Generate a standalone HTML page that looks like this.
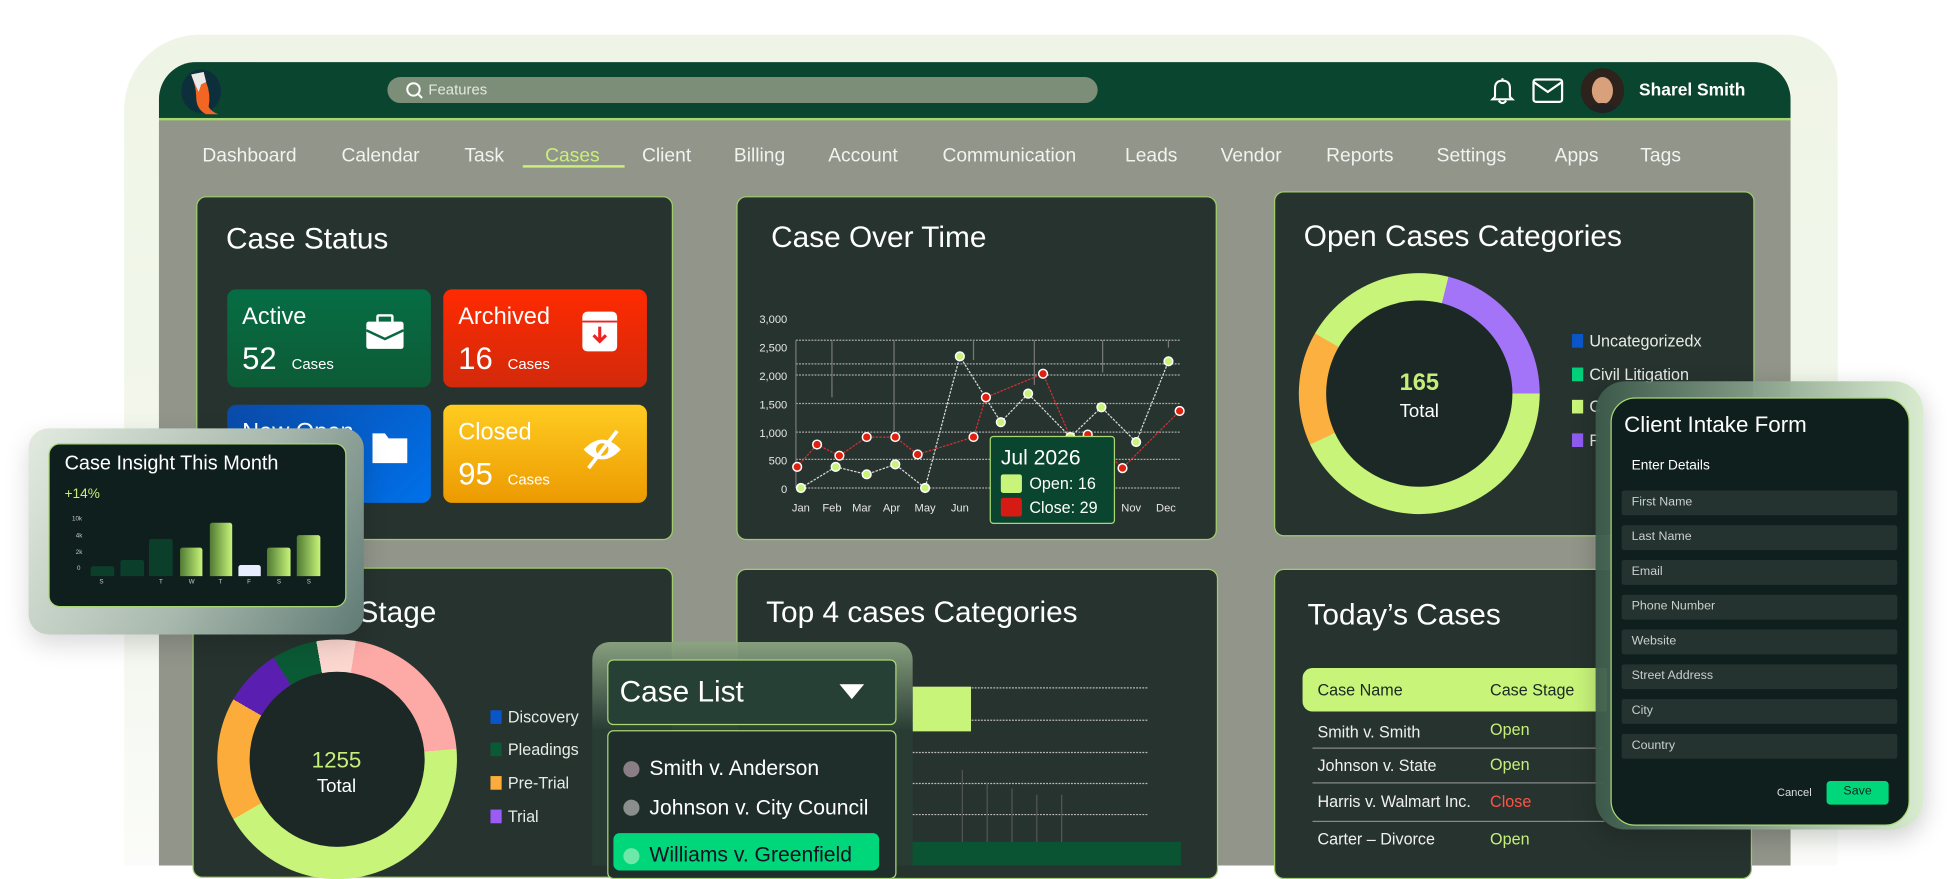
<!DOCTYPE html>
<html><head><meta charset="utf-8"><style>
*{margin:0;padding:0;box-sizing:border-box}
html,body{width:1947px;height:865px;overflow:hidden;background:#fff;font-family:"Liberation Sans",sans-serif}
#w{position:absolute;left:0;top:0;width:1568px;height:697px;transform:scale(1.24171);transform-origin:0 0}
.a{position:absolute}
.card{position:absolute;background:#27332f;border:1px solid #9fcf6a;border-radius:8px}
.t{position:absolute;color:#fff;white-space:nowrap}
.nav{position:absolute;top:117px;color:#f2f2ee;font-size:15.5px}
.tile{position:absolute;width:164px;height:79px;border-radius:7px}
.tile .n{position:absolute;left:12px;top:12px;color:#fff;font-size:19px}
.tile .c{position:absolute;left:12px;top:42px;color:#fff;font-size:25px}
.tile .c span{font-size:12px;margin-left:12px}
.fld{position:absolute;left:9px;width:222px;height:20px;background:#243330;border-radius:2px;color:#c9cfcc;font-size:10px;padding:4px 0 0 8px}
.lg{position:absolute;font-size:13px;color:#e8ece6}
.lg i{position:absolute;left:-14px;top:2px;width:9px;height:11px}
.row{position:absolute;left:1061px;font-size:13px;color:#f0f0f0}
.st{position:absolute;left:1200px;font-size:13px}
</style></head><body><div id="w">
<div class="a" style="left:100px;top:28px;width:1380px;height:669px;border-radius:60px 40px 0 0;background:linear-gradient(180deg,#eff5e6,#f3f7ee 70%,#fbfcf9);"></div>
<div class="a" style="left:128px;top:50px;width:1314px;height:647px;background:#92958a;border-radius:30px 30px 0 0;overflow:hidden">
 <div class="a" style="left:0;top:0;width:1314px;height:47px;background:#0a4530;border-bottom:2px solid #a9d873"></div>
</div>
<div class="a" style="left:146px;top:56px;width:32px;height:35px;border-radius:50%;background:#0d2f3c"></div>
<svg class="a" style="left:144px;top:54px" width="40" height="42" viewBox="0 0 40 42"><path d="M10 6 L20 4 L22 12 Q26 22 24 32 Q26 36 32 38 L22 38 Q14 34 14 24 Q14 16 10 6Z" fill="#f26522"/><path d="M10 6 L20 4 L22 12 L18 14 L16 20 Q12 12 10 6Z" fill="#e9e9e9"/></svg>
<div class="a" style="left:312px;top:62px;width:572px;height:21px;border-radius:11px;background:#7c8d78"></div>
<svg class="a" style="left:326px;top:65px" width="16" height="16" viewBox="0 0 16 16"><circle cx="7" cy="7" r="5" fill="none" stroke="#fff" stroke-width="1.6"/><path d="M10.5 10.5 L14 14" stroke="#fff" stroke-width="1.6"/></svg>
<div class="t" style="left:345px;top:65px;font-size:12px;color:#e4e8e0">Features</div>
<svg class="a" style="left:1199px;top:60px" width="22" height="26" viewBox="0 0 22 26"><path d="M11 3 V5 M5 18 V11 Q5 5 11 5 Q17 5 17 11 V18 L19 20 H3 L5 18Z M8 21 Q11 25 14 21" fill="none" stroke="#fff" stroke-width="1.7"/></svg>
<svg class="a" style="left:1233px;top:61px" width="28" height="24" viewBox="0 0 28 24"><rect x="2" y="3" width="23" height="18" rx="2" fill="none" stroke="#fff" stroke-width="1.8"/><path d="M2 5 L13.5 13 L25 5" fill="none" stroke="#fff" stroke-width="1.8"/></svg>
<div class="a" style="left:1273px;top:55px;width:35px;height:36px;border-radius:50%;background:#2e221c;overflow:hidden"><div class="a" style="left:9px;top:7px;width:17px;height:22px;border-radius:50%;background:#d9a07c"></div><div class="a" style="left:6px;top:28px;width:23px;height:12px;border-radius:50%;background:#222"></div></div>
<div class="t" style="left:1320px;top:64px;font-size:14px;font-weight:bold">Sharel Smith</div>
<div class="nav" style="left:163px">Dashboard</div>
<div class="nav" style="left:275px">Calendar</div>
<div class="nav" style="left:374px">Task</div>
<div class="nav" style="left:439px;color:#c8f07a">Cases</div>
<div class="a" style="left:421px;top:133px;width:82px;height:2px;background:#c8f07a"></div>
<div class="nav" style="left:517px">Client</div>
<div class="nav" style="left:591px">Billing</div>
<div class="nav" style="left:667px">Account</div>
<div class="nav" style="left:759px">Communication</div>
<div class="nav" style="left:906px">Leads</div>
<div class="nav" style="left:983px">Vendor</div>
<div class="nav" style="left:1068px">Reports</div>
<div class="nav" style="left:1157px">Settings</div>
<div class="nav" style="left:1252px">Apps</div>
<div class="nav" style="left:1321px">Tags</div>

<div class="card" style="left:158px;top:158px;width:384px;height:277px"></div>
<div class="t" style="left:182px;top:179px;font-size:24px">Case Status</div>
<div class="tile" style="left:183px;top:233px;background:linear-gradient(#066d44,#0d5b36)"><div class="n">Active</div><div class="c">52<span>Cases</span></div>
<svg class="a" style="left:110px;top:20px" width="34" height="32" viewBox="0 0 34 32"><rect x="2" y="6" width="30" height="22" rx="2" fill="#fff"/><rect x="11" y="1" width="12" height="7" rx="1" fill="none" stroke="#fff" stroke-width="2"/><path d="M2 13 L17 20 L32 13" stroke="#0a6840" stroke-width="2" fill="none"/></svg></div>
<div class="tile" style="left:357px;top:233px;background:linear-gradient(#ff2a00,#d22a0c)"><div class="n">Archived</div><div class="c">16<span>Cases</span></div>
<svg class="a" style="left:110px;top:16px" width="32" height="36" viewBox="0 0 32 36"><rect x="2" y="2" width="28" height="32" rx="4" fill="#fff"/><path d="M2 10 H30" stroke="#e22" stroke-width="1.5"/><path d="M16 14 V26 M11 21 L16 26 L21 21" stroke="#e22" stroke-width="2.5" fill="none"/></svg></div>
<div class="tile" style="left:183px;top:326px;background:linear-gradient(135deg,#0a4aa8,#0071ea)"><div class="n">New Open</div>
<svg class="a" style="left:115px;top:20px" width="34" height="30" viewBox="0 0 34 30"><path d="M2 3 H12 L15 7 H30 V27 H2Z" fill="#fff"/></svg></div>
<div class="tile" style="left:357px;top:326px;background:linear-gradient(#ffcc22,#ec9a00)"><div class="n">Closed</div><div class="c">95<span>Cases</span></div>
<svg class="a" style="left:110px;top:18px" width="36" height="36" viewBox="0 0 36 36"><path d="M3 18 Q18 2 33 18 Q18 34 3 18Z" fill="#fff"/><circle cx="18" cy="18" r="5" fill="#f5b612"/><path d="M30 3 L7 33" stroke="#fff" stroke-width="3"/></svg></div>

<div class="card" style="left:593px;top:158px;width:387px;height:277px"></div>
<div class="t" style="left:621px;top:178px;font-size:24px">Case Over Time</div>
<svg class="a" style="left:593px;top:240px" width="387" height="190" viewBox="593 240 387 190">
<g font-size="9" fill="#e6e6e6" font-family="Liberation Sans" text-anchor="end">
<text x="634" y="260">3,000</text><text x="634" y="283">2,500</text><text x="634" y="306">2,000</text><text x="634" y="329">1,500</text><text x="634" y="352">1,000</text><text x="634" y="374">500</text><text x="634" y="397">0</text></g>
<g stroke="#aaa" stroke-dasharray="1.5 1" stroke-width="1"><path d="M641 274H950M641 293H950M641 302H950M641 325H950M641 348H950M641 370H950M641 393H950"/></g>
<g stroke="#777" stroke-width="1"><path d="M641 274V393M670 274V320M720 274V347M784 274V290M833 274V310M888 274V300M941 274V280"/></g>
<g font-size="9" fill="#e6e6e6" font-family="Liberation Sans" text-anchor="middle">
<text x="645" y="412">Jan</text><text x="670" y="412">Feb</text><text x="694" y="412">Mar</text><text x="718" y="412">Apr</text><text x="745" y="412">May</text><text x="773" y="412">Jun</text><text x="911" y="412">Nov</text><text x="939" y="412">Dec</text></g>
<polyline fill="none" stroke="#d9d9d9" stroke-width="1" stroke-dasharray="2 1" points="645,393 673,376 698,382 721,374 745,393 773,287 806,340 828,317 862,352 887,328 915,356 941,291"/>
<polyline fill="none" stroke="#c33" stroke-width="1" stroke-dasharray="2 1" points="642,376 658,358 676,367 698,352 721,352 739,366 784,352 794,320 840,301 862,352 876,350 904,377 950,331"/>
<g fill="#c8f47a" stroke="#fff" stroke-width="1.2"><circle cx="645" cy="393" r="3.5"/><circle cx="673" cy="376" r="3.5"/><circle cx="698" cy="382" r="3.5"/><circle cx="721" cy="374" r="3.5"/><circle cx="745" cy="393" r="3.5"/><circle cx="773" cy="287" r="3.5"/><circle cx="806" cy="340" r="3.5"/><circle cx="828" cy="317" r="3.5"/><circle cx="862" cy="352" r="3.5"/><circle cx="887" cy="328" r="3.5"/><circle cx="915" cy="356" r="3.5"/><circle cx="941" cy="291" r="3.5"/></g>
<g fill="#e0200f" stroke="#fff" stroke-width="1.2"><circle cx="642" cy="376" r="3.5"/><circle cx="658" cy="358" r="3.5"/><circle cx="676" cy="367" r="3.5"/><circle cx="698" cy="352" r="3.5"/><circle cx="721" cy="352" r="3.5"/><circle cx="739" cy="366" r="3.5"/><circle cx="784" cy="352" r="3.5"/><circle cx="794" cy="320" r="3.5"/><circle cx="840" cy="301" r="3.5"/><circle cx="876" cy="350" r="3.5"/><circle cx="904" cy="377" r="3.5"/><circle cx="950" cy="331" r="3.5"/></g>
</svg>
<div class="a" style="left:797px;top:351px;width:101px;height:71px;background:#0a4530;border:1px solid #a9d873;border-radius:3px"></div>
<div class="t" style="left:806px;top:359px;font-size:17px">Jul 2026</div>
<div class="a" style="left:806px;top:382px;width:17px;height:15px;background:#c8f47a;border-radius:2px"></div>
<div class="t" style="left:829px;top:382px;font-size:13px">Open: 16</div>
<div class="a" style="left:806px;top:401px;width:17px;height:15px;background:#d61a14;border-radius:2px"></div>
<div class="t" style="left:829px;top:401px;font-size:13px">Close: 29</div>

<div class="card" style="left:1026px;top:154px;width:387px;height:278px"></div>
<div class="t" style="left:1050px;top:177px;font-size:24px">Open Cases Categories</div>
<div class="a" style="left:1046px;top:220px;width:194px;height:194px;border-radius:50%;background:conic-gradient(#c8f47a 0 14deg,#a374f7 14deg 90deg,#c8f47a 90deg 245deg,#fbb040 245deg 300deg,#c8f47a 300deg)"></div>
<div class="a" style="left:1068px;top:242px;width:150px;height:150px;border-radius:50%;background:#1c2826"></div>
<div class="t" style="left:1143px;top:298px;transform:translateX(-50%);font-size:19px;font-weight:bold;color:#c6ef7a">165</div>
<div class="t" style="left:1143px;top:323px;transform:translateX(-50%);font-size:15px">Total</div>
<div class="lg" style="left:1280px;top:267px"><i style="background:#0a55c8"></i>Uncategorizedx</div>
<div class="lg" style="left:1280px;top:294px"><i style="background:#00d07a"></i>Civil Litigation</div>
<div class="lg" style="left:1280px;top:320px"><i style="background:#c8f47a"></i>C</div>
<div class="lg" style="left:1280px;top:347px"><i style="background:#8f5cf0"></i>F</div>

<div class="card" style="left:155px;top:457px;width:387px;height:250px"></div>
<div class="t" style="left:182px;top:480px;font-size:24px">Cases by Stage</div>
<div class="a" style="left:175px;top:515px;width:193px;height:193px;border-radius:50%;background:conic-gradient(#fcd7d0 0 9deg,#fdaaa6 9deg 85deg,#c8f47a 85deg 240deg,#fbac3a 240deg 300deg,#5a1fb0 300deg 328deg,#0b5a36 328deg 350deg,#fcd7d0 350deg)"></div>
<div class="a" style="left:201px;top:541px;width:141px;height:141px;border-radius:50%;background:#1c2826"></div>
<div class="t" style="left:271px;top:602px;transform:translateX(-50%);font-size:18px;color:#c6ef7a">1255</div>
<div class="t" style="left:271px;top:625px;transform:translateX(-50%);font-size:15px">Total</div>
<div class="lg" style="left:409px;top:570px"><i style="background:#0a55c8"></i>Discovery</div>
<div class="lg" style="left:409px;top:596px"><i style="background:#0b5a36"></i>Pleadings</div>
<div class="lg" style="left:409px;top:623px"><i style="background:#fbac3a"></i>Pre-Trial</div>
<div class="lg" style="left:409px;top:650px"><i style="background:#9b5cf5"></i>Trial</div>

<div class="card" style="left:593px;top:458px;width:388px;height:250px"></div>
<div class="t" style="left:617px;top:480px;font-size:24px">Top 4 cases Categories</div>
<svg class="a" style="left:720px;top:545px" width="240" height="152"><g stroke="#bbb" stroke-dasharray="1.5 1"><path d="M15 9H205M15 35H205M15 61H205M15 86H205M15 111H205M15 139H205"/></g><g stroke="#555"><path d="M55 75V140M75 85V140M95 90V140M115 95V140M135 95V140"/></g></svg>
<div class="a" style="left:735px;top:553px;width:47px;height:36px;background:#c8f47a"></div>
<div class="a" style="left:733px;top:678px;width:218px;height:19px;background:#0a5433"></div>

<div class="card" style="left:1026px;top:458px;width:385px;height:250px"></div>
<div class="t" style="left:1053px;top:482px;font-size:24px">Today’s Cases</div>
<div class="a" style="left:1049px;top:538px;width:245px;height:35px;background:#c8f47a;border-radius:8px 0 0 8px"></div>
<div class="t" style="left:1061px;top:548px;font-size:13px;color:#1b2a22">Case Name</div>
<div class="t" style="left:1200px;top:548px;font-size:13px;color:#1b2a22">Case Stage</div>
<div class="row" style="top:582px">Smith v. Smith</div><div class="st" style="top:580px;color:#c6ef7a">Open</div>
<div class="a" style="left:1057px;top:602px;width:235px;height:1px;background:#888"></div>
<div class="row" style="top:609px">Johnson v. State</div><div class="st" style="top:608px;color:#c6ef7a">Open</div>
<div class="a" style="left:1057px;top:630px;width:235px;height:1px;background:#888"></div>
<div class="row" style="top:638px">Harris v. Walmart Inc.</div><div class="st" style="top:638px;color:#ff5346">Close</div>
<div class="a" style="left:1057px;top:661px;width:235px;height:1px;background:#888"></div>
<div class="row" style="top:668px">Carter – Divorce</div><div class="st" style="top:668px;color:#c6ef7a">Open</div>

<div class="a" style="left:23px;top:345px;width:270px;height:166px;border-radius:16px;background:linear-gradient(120deg,#e3ebe0,#a9b9ae 55%,#5f7a74);box-shadow:0 8px 20px rgba(0,0,0,.15)"></div>
<div class="a" style="left:39px;top:357px;width:240px;height:132px;border-radius:9px;background:#0f1f1d;border:1px solid #a9d873"></div>
<div class="t" style="left:52px;top:365px;font-size:16px">Case Insight This Month</div>
<div class="t" style="left:52px;top:392px;font-size:11px;color:#c6ef7a">+14%</div>
<div class="t" style="left:58px;top:415px;font-size:5px;color:#ccc">10k</div>
<div class="t" style="left:61px;top:429px;font-size:5px;color:#ccc">4k</div>
<div class="t" style="left:61px;top:442px;font-size:5px;color:#ccc">2k</div>
<div class="t" style="left:62px;top:455px;font-size:5px;color:#ccc">0</div>
<div class="a" style="left:73px;top:456px;width:19px;height:8px;background:#0b3f2c;border-radius:2px 2px 0 0"></div>
<div class="a" style="left:97px;top:451px;width:19px;height:13px;background:#0b3f2c;border-radius:2px 2px 0 0"></div>
<div class="a" style="left:120px;top:434px;width:19px;height:30px;background:#0b3f2c;border-radius:2px 2px 0 0"></div>
<div class="a" style="left:145px;top:441px;width:18px;height:23px;background:linear-gradient(90deg,#4f7a33,#c8f47a);border-radius:2px 2px 0 0"></div>
<div class="a" style="left:169px;top:421px;width:18px;height:43px;background:linear-gradient(90deg,#4f7a33,#c8f47a);border-radius:2px 2px 0 0"></div>
<div class="a" style="left:192px;top:455px;width:18px;height:9px;background:#e8eeff;border-radius:2px 2px 0 0"></div>
<div class="a" style="left:215px;top:441px;width:19px;height:23px;background:linear-gradient(90deg,#4f7a33,#c8f47a);border-radius:2px 2px 0 0"></div>
<div class="a" style="left:239px;top:431px;width:19px;height:33px;background:linear-gradient(90deg,#4f7a33,#c8f47a);border-radius:2px 2px 0 0"></div>
<div class="t" style="left:80px;top:466px;font-size:5px;color:#ccc">S</div>
<div class="t" style="left:128px;top:466px;font-size:5px;color:#ccc">T</div>
<div class="t" style="left:152px;top:466px;font-size:5px;color:#ccc">W</div>
<div class="t" style="left:176px;top:466px;font-size:5px;color:#ccc">T</div>
<div class="t" style="left:199px;top:466px;font-size:5px;color:#ccc">F</div>
<div class="t" style="left:223px;top:466px;font-size:5px;color:#ccc">S</div>
<div class="t" style="left:247px;top:466px;font-size:5px;color:#ccc">S</div>

<div class="a" style="left:477px;top:517px;width:258px;height:180px;border-radius:14px 14px 0 0;background:linear-gradient(180deg,rgba(140,165,130,.95),rgba(40,60,52,.95) 40%)"></div>
<div class="a" style="left:489px;top:531px;width:233px;height:53px;border-radius:5px;background:#274035;border:1px solid #a9d873"></div>
<div class="t" style="left:499px;top:544px;font-size:24px">Case List</div>
<svg class="a" style="left:676px;top:551px" width="20" height="12"><path d="M0 0H20L10 12Z" fill="#fff"/></svg>
<div class="a" style="left:489px;top:588px;width:233px;height:120px;border-radius:5px;background:#1f2e2a;border:1px solid #a9d873"></div>
<div class="a" style="left:502px;top:613px;width:13px;height:13px;border-radius:50%;background:#8a7e86"></div>
<div class="t" style="left:523px;top:609px;font-size:17px">Smith v. Anderson</div>
<div class="a" style="left:502px;top:644px;width:13px;height:13px;border-radius:50%;background:#8a8f8e"></div>
<div class="t" style="left:523px;top:641px;font-size:17px">Johnson v. City Council</div>
<div class="a" style="left:494px;top:671px;width:214px;height:30px;border-radius:5px;background:#00d77b"></div>
<div class="a" style="left:502px;top:683px;width:13px;height:13px;border-radius:50%;background:#6ee8a8"></div>
<div class="t" style="left:523px;top:679px;font-size:17px;color:#112">Williams v. Greenfield</div>

<div class="a" style="left:1285px;top:307px;width:264px;height:361px;border-radius:24px;background:linear-gradient(90deg,rgba(60,90,75,.95),rgba(215,235,205,.95));box-shadow:0 6px 20px rgba(0,0,0,.2)"></div>
<div class="a" style="left:1297px;top:320px;width:241px;height:345px;border-radius:20px;background:#0f1f1d;border:1px solid #a9d873"></div>
<div class="a" style="left:1297px;top:320px;width:241px">
<div class="t" style="left:11px;top:12px;font-size:18px">Client Intake Form</div>
<div class="t" style="left:17px;top:49px;font-size:11px">Enter Details</div>
<div class="fld" style="top:75px">First Name</div>
<div class="fld" style="top:103px">Last Name</div>
<div class="fld" style="top:131px">Email</div>
<div class="fld" style="top:159px">Phone Number</div>
<div class="fld" style="top:187px">Website</div>
<div class="fld" style="top:215px">Street Address</div>
<div class="fld" style="top:243px">City</div>
<div class="fld" style="top:271px">Country</div>
<div class="t" style="left:134px;top:313px;font-size:9px;color:#ddd">Cancel</div>
<div class="a" style="left:174px;top:309px;width:50px;height:19px;background:#00d77b;border-radius:3px;color:#0d2b1f;font-size:10px;text-align:center;padding-top:3px">Save</div>
</div>
</div></body></html>
